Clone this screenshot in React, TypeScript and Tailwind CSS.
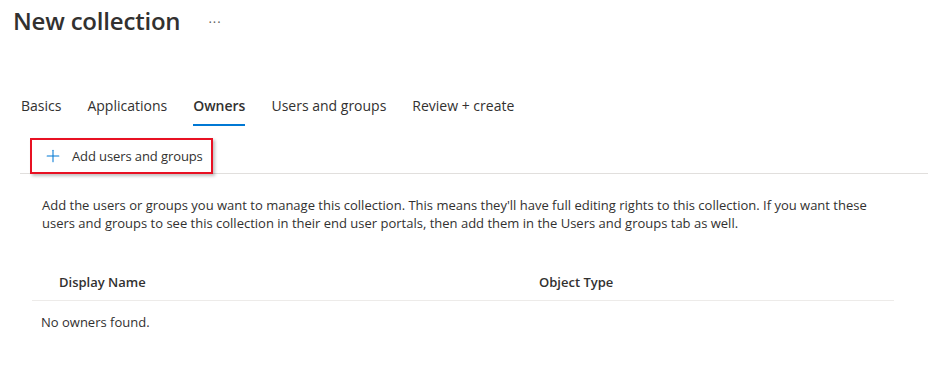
import { Plus } from "lucide-react";

const tabs = [
    { name: "Basics", active: false },
    { name: "Applications", active: false },
    { name: "Owners", active: true },
    { name: "Users and groups", active: false },
    { name: "Review + create", active: false },
];

export default function App() {
    return (
        <div
            className="w-[946px] h-[374px] bg-white text-[#323130] overflow-hidden"
            style={{ fontFamily: '"Open Sans", "Noto Sans", sans-serif' }}
        >
            {/* Header */}
            <div className="flex items-center pl-[13px] pt-[5px] h-[37px]">
                <h1 className="text-[24px] leading-[32px] font-semibold tracking-[-0.2px]">New collection</h1>
                <span className="ml-[28px] text-[13px] leading-none text-[#605e5c] tracking-[1px] mt-[2px]">···</span>
            </div>

            {/* Tabs */}
            <div className="flex items-end gap-[26px] pl-[21px] mt-[55px] h-[34px]">
                {tabs.map((tab) => (
                    <div key={tab.name} className="relative pb-[9px]">
                        <span
                            className={`text-[14px] leading-[20px] ${tab.active ? "font-semibold" : ""}`}
                        >
                            {tab.name}
                        </span>
                        {tab.active && (
                            <div className="absolute left-0 right-0 bottom-0 h-[2px] bg-[#0078d4]" />
                        )}
                    </div>
                ))}
            </div>

            {/* Command bar */}
            <div className="relative ml-[20px] mr-[18px] mt-[12px] h-[36px] border-b border-[#e1dfdd]">
                <div className="absolute left-[10px] top-0 w-[183px] h-[36px] border-2 border-[#e81123] shadow-[2px_2px_3px_rgba(0,0,0,0.25)]" />
                <div className="flex items-center h-[36px] pl-[23px] gap-[9px]">
                    <Plus size={20} strokeWidth={1.25} className="text-[#0078d4]" />
                    <span className="text-[13px] leading-[18px] tracking-[-0.1px]">Add users and groups</span>
                </div>
            </div>

            {/* Description */}
            <p className="ml-[42px] mt-[22px] w-[840px] text-[13px] leading-[18px]">
                Add the users or groups you want to manage this collection. This means they'll have full editing rights to this collection. If you want these users and groups to see this collection in their end user portals, then add them in the Users and groups tab as well.
            </p>

            {/* Table */}
            <div className="ml-[32px] w-[862px] mt-[33px]">
                <div className="flex h-[36px] items-center border-b border-[#edebe9] text-[13px] font-semibold">
                    <div className="pl-[27px] w-[507px]">Display Name</div>
                    <div>Object Type</div>
                </div>
            </div>
            <p className="ml-[41px] mt-[12px] text-[13px] leading-[18px]">No owners found.</p>
        </div>
    );
}
